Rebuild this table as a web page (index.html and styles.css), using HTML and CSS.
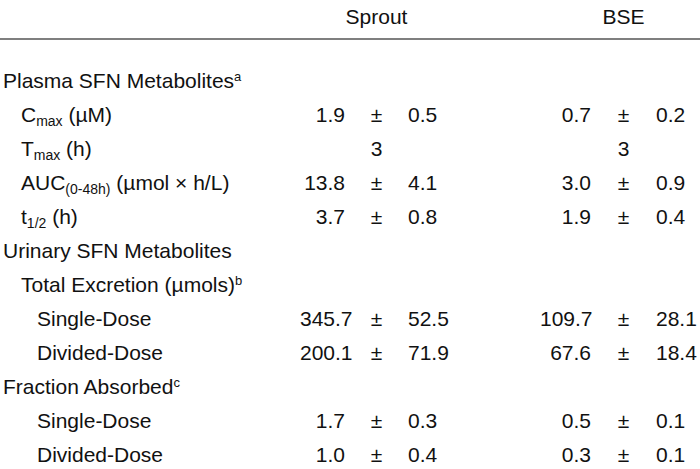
FILE: index.html
```html
<!DOCTYPE html>
<html>
<head>
<meta charset="utf-8">
<link rel="stylesheet" href="styles.css">
</head>
<body>
<div class="page">
  <div class="head">
    <div></div><div></div>
    <div class="hcell">Sprout</div>
    <div></div><div></div>
    <div class="hcell">BSE</div>
    <div></div>
  </div>
  <table class="data">
    <colgroup>
      <col class="c-label"><col class="c-mean"><col class="c-pm"><col class="c-sd">
      <col class="c-mean2"><col class="c-pm2"><col class="c-sd2">
    </colgroup>
    <tbody>
      <tr><td class="l0">Plasma SFN Metabolites<sup>a</sup></td><td></td><td></td><td></td><td></td><td></td><td></td></tr>
      <tr><td class="l1">C<sub>max</sub> (µM)</td><td class="m">1.9</td><td class="pm">±</td><td class="sd">0.5</td><td class="m">0.7</td><td class="pm">±</td><td class="sd">0.2</td></tr>
      <tr><td class="l1">T<sub>max</sub> (h)</td><td></td><td class="pm">3</td><td></td><td></td><td class="pm">3</td><td></td></tr>
      <tr><td class="l1">AUC<sub>(0-48h)</sub> (µmol × h/L)</td><td class="m">13.8</td><td class="pm">±</td><td class="sd">4.1</td><td class="m">3.0</td><td class="pm">±</td><td class="sd">0.9</td></tr>
      <tr><td class="l1">t<sub>1/2</sub> (h)</td><td class="m">3.7</td><td class="pm">±</td><td class="sd">0.8</td><td class="m">1.9</td><td class="pm">±</td><td class="sd">0.4</td></tr>
      <tr><td class="l0">Urinary SFN Metabolites</td><td></td><td></td><td></td><td></td><td></td><td></td></tr>
      <tr><td class="l1">Total Excretion (µmols)<sup>b</sup></td><td></td><td></td><td></td><td></td><td></td><td></td></tr>
      <tr><td class="l2">Single-Dose</td><td class="m">345.7</td><td class="pm">±</td><td class="sd">52.5</td><td class="m">109.7</td><td class="pm">±</td><td class="sd">28.1</td></tr>
      <tr><td class="l2">Divided-Dose</td><td class="m">200.1</td><td class="pm">±</td><td class="sd">71.9</td><td class="m">67.6</td><td class="pm">±</td><td class="sd">18.4</td></tr>
      <tr><td class="l0">Fraction Absorbed<sup>c</sup></td><td></td><td></td><td></td><td></td><td></td><td></td></tr>
      <tr><td class="l2">Single-Dose</td><td class="m">1.7</td><td class="pm">±</td><td class="sd">0.3</td><td class="m">0.5</td><td class="pm">±</td><td class="sd">0.1</td></tr>
      <tr><td class="l2">Divided-Dose</td><td class="m">1.0</td><td class="pm">±</td><td class="sd">0.4</td><td class="m">0.3</td><td class="pm">±</td><td class="sd">0.1</td></tr>
    </tbody>
  </table>
</div>
</body>
</html>
```

FILE: styles.css
```css
html, body {
  margin: 0;
  padding: 0;
  background: #ffffff;
}
body {
  width: 700px;
  height: 469px;
  overflow: hidden;
  font-family: "Liberation Sans", Arial, sans-serif;
  font-size: 21px;
  color: #111111;
}
.page {
  width: 700px;
}
.head {
  display: grid;
  grid-template-columns: 300px 45px 63px 132px 51px 65px 44px;
  height: 38px;
  line-height: 34px;
  border-bottom: 2px solid #7f7f7f;
}
.hcell {
  text-align: center;
  white-space: nowrap;
  display: flex;
  justify-content: center;
}
.data {
  margin-top: 24px;
  width: 700px;
  table-layout: fixed;
  border-collapse: collapse;
  border-spacing: 0;
}
.c-label { width: 300px; }
.c-mean { width: 45px; }
.c-pm { width: 63px; }
.c-sd { width: 132px; }
.c-mean2 { width: 51px; }
.c-pm2 { width: 65px; }
.c-sd2 { width: 44px; }
.data td {
  padding: 0;
  height: 34px;
  line-height: 34px;
  white-space: nowrap;
  vertical-align: top;
}
.data .l0 { padding-left: 3px; }
.data .l1 { padding-left: 21px; }
.data .l2 { padding-left: 37px; }
.m { text-align: right; }
.pm { text-align: center; }
.sd { text-align: left; }
sub {
  font-size: 14px;
  line-height: 0;
  vertical-align: -4px;
}
sup {
  font-size: 13px;
  line-height: 0;
  vertical-align: 7px;
}
```
